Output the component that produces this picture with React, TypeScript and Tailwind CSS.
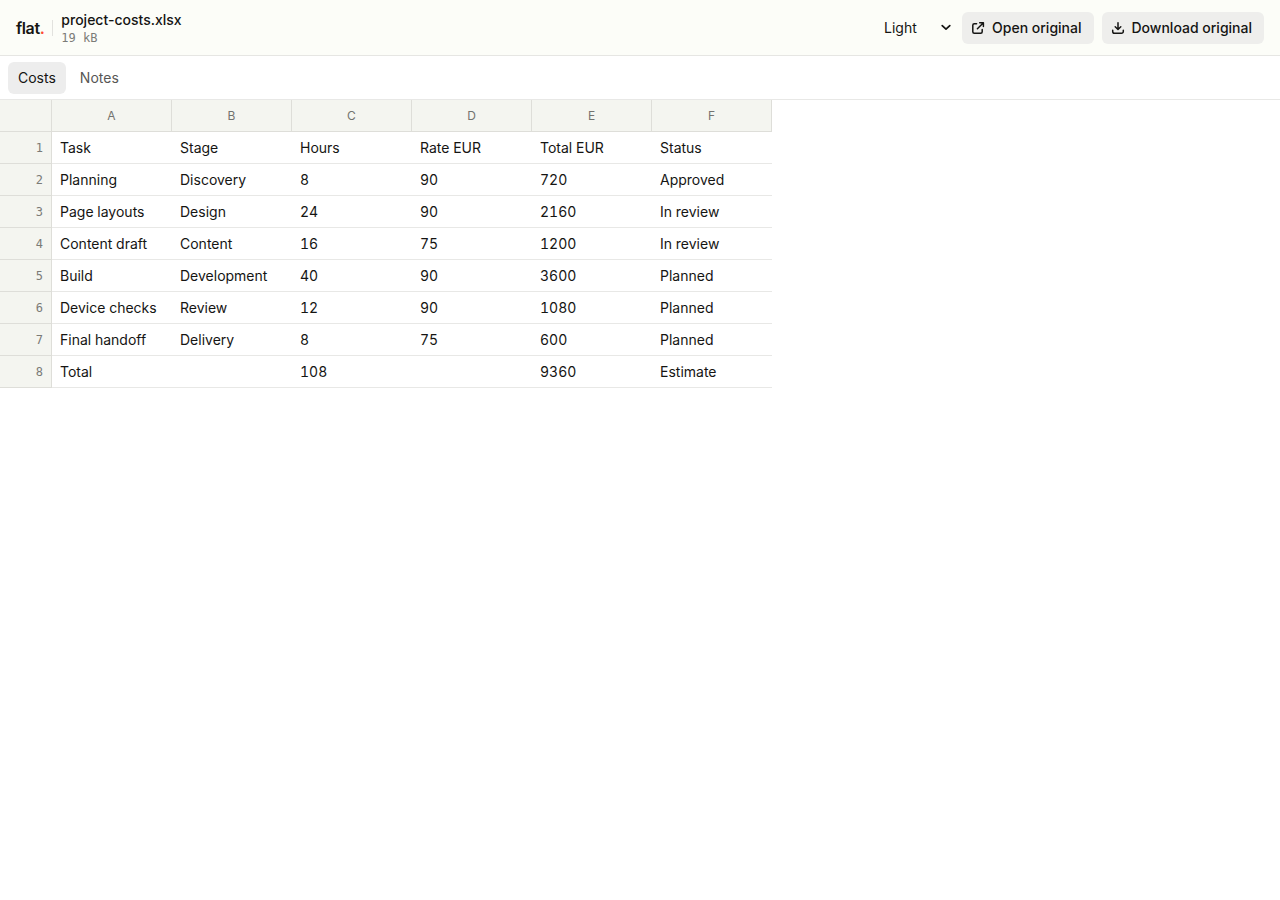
import { useState } from 'react';
import type { ReactNode } from 'react';

interface Sheet {
  name: string;
  rows: string[][];
}

const SHEETS: Sheet[] = [
  {
    name: 'Costs',
    rows: [
      ['Task', 'Stage', 'Hours', 'Rate EUR', 'Total EUR', 'Status'],
      ['Planning', 'Discovery', '8', '90', '720', 'Approved'],
      ['Page layouts', 'Design', '24', '90', '2160', 'In review'],
      ['Content draft', 'Content', '16', '75', '1200', 'In review'],
      ['Build', 'Development', '40', '90', '3600', 'Planned'],
      ['Device checks', 'Review', '12', '90', '1080', 'Planned'],
      ['Final handoff', 'Delivery', '8', '75', '600', 'Planned'],
      ['Total', '', '108', '', '9360', 'Estimate'],
    ],
  },
  { name: 'Notes', rows: [['', '', '', '', '', '']] },
];

const COLUMNS = ['A', 'B', 'C', 'D', 'E', 'F'];

const Icon = ({ children, className }: { children: ReactNode; className?: string }) => (
  <svg
    width="14"
    height="14"
    viewBox="0 0 14 14"
    fill="none"
    stroke="currentColor"
    strokeWidth="1.5"
    strokeLinecap="round"
    strokeLinejoin="round"
    aria-hidden="true"
    className={className}
  >
    {children}
  </svg>
);

const ActionLink = ({ icon, label }: { icon: ReactNode; label: string }) => (
  <a
    href="#"
    className="flex h-8 items-center gap-[7px] rounded-md bg-[#eeeeec] pl-[9px] pr-3 text-sm font-medium hover:bg-[#e4e4e2]"
  >
    {icon}
    {label}
  </a>
);

const SheetTable = ({ rows }: { rows: string[][] }) => (
  <table className="table-fixed border-separate border-spacing-0 text-sm tabular-nums">
    <thead>
      <tr className="h-8 bg-[#f4f5f0] text-xs text-[#73736f]">
        <th className="w-[52px] border-b border-r border-[#deded9] p-0" aria-label="Row" />
        {COLUMNS.map((column) => (
          <th
            key={column}
            scope="col"
            className="w-[120px] border-b border-r border-[#deded9] p-0 text-center font-normal"
          >
            {column}
          </th>
        ))}
      </tr>
    </thead>
    <tbody>
      {rows.map((row, index) => (
        <tr key={index} className="h-8">
          <th
            scope="row"
            className="border-b border-r border-[#deded9] bg-[#f4f5f0] py-0 pl-0 pr-2 text-right font-['DejaVu_Sans_Mono',monospace] text-xs font-normal text-[#7b7b77]"
          >
            {index + 1}
          </th>
          {row.map((cell, i) => (
            <td key={i} className="whitespace-nowrap border-b border-[#e8e8e6] px-2 py-0">
              {cell}
            </td>
          ))}
        </tr>
      ))}
    </tbody>
  </table>
);

export default function App() {
  const [active, setActive] = useState(0);

  return (
    <div className="flex min-h-screen flex-col bg-white font-['Inter',sans-serif] text-[#151513]">
      <header className="flex h-14 items-center justify-between border-b border-[#e6e6e3] bg-[#fcfdf8] px-4">
        <div className="flex items-center gap-2">
          <a href="#" className="text-base font-semibold tracking-tight">
            flat<span className="text-[#ff4a35]">.</span>
          </a>
          <span className="h-4 w-px bg-[#e2e2de]" />
          <div>
            <h1 className="text-sm font-medium leading-5">project-costs.xlsx</h1>
            <p className="font-['DejaVu_Sans_Mono',monospace] text-xs leading-4 text-[#7b7b77]">19 kB</p>
          </div>
        </div>
        <div className="flex items-center gap-2">
          <div className="grid items-center">
            <select
              aria-label="Theme"
              defaultValue="Light"
              className="col-start-1 row-start-1 h-8 w-20 appearance-none bg-transparent pl-[10px] text-sm"
            >
              <option>Light</option>
              <option>Dark</option>
              <option>System</option>
            </select>
            <Icon className="pointer-events-none col-start-1 row-start-1 mr-px justify-self-end">
              <path d="M3.2 4.6L7 8.2l3.8-3.6" strokeWidth="1.7" />
            </Icon>
          </div>
          <ActionLink
            label="Open original"
            icon={
              <Icon>
                <path d="M8.7 1.8h3.7v3.7M12.2 2L6.4 7.8M5.6 2.8H3.3a1.5 1.5 0 0 0-1.5 1.5v6.4a1.5 1.5 0 0 0 1.5 1.5h6.4a1.5 1.5 0 0 0 1.5-1.5V8.4" />
              </Icon>
            }
          />
          <ActionLink
            label="Download original"
            icon={
              <Icon>
                <path d="M7 1.8v6.4M4.2 5.8L7 8.5l2.8-2.7M1.7 9.2v1.2a1.8 1.8 0 0 0 1.8 1.8h7a1.8 1.8 0 0 0 1.8-1.8V9.2" />
              </Icon>
            }
          />
        </div>
      </header>

      <nav className="flex h-11 items-center gap-1 border-b border-[#e8e8e6] px-2">
        {SHEETS.map((sheet, index) => (
          <button
            key={sheet.name}
            type="button"
            onClick={() => setActive(index)}
            className={
              index === active
                ? 'h-8 rounded-md bg-[#ededed] px-[10px] text-sm'
                : 'h-8 rounded-md px-[10px] text-sm text-[#575755]'
            }
          >
            {sheet.name}
          </button>
        ))}
      </nav>

      <main className="overflow-auto">
        <SheetTable rows={SHEETS[active].rows} />
      </main>
    </div>
  );
}
